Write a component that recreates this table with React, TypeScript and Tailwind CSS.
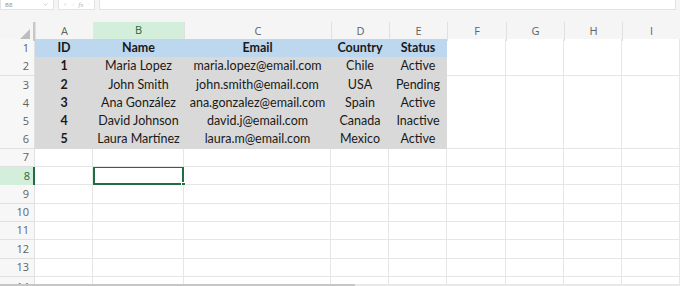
import React from 'react';
import { ChevronDown, X, Check } from 'lucide-react';

const cols = ['A', 'B', 'C', 'D', 'E', 'F', 'G', 'H', 'I'];
const gridCols = 'grid grid-cols-[35px_58px_91px_147px_58px_58px_59px_58px_58px_58px]';

const header = ['ID', 'Name', 'Email', 'Country', 'Status'];
const data = [
  ['1', 'Maria Lopez', 'maria.lopez@email.com', 'Chile', 'Active'],
  ['2', 'John Smith', 'john.smith@email.com', 'USA', 'Pending'],
  ['3', 'Ana González', 'ana.gonzalez@email.com', 'Spain', 'Active'],
  ['4', 'David Johnson', 'david.j@email.com', 'Canada', 'Inactive'],
  ['5', 'Laura Martínez', 'laura.m@email.com', 'Mexico', 'Active'],
];

// row heights as they fall on screen; row 14 is cut by the scroll strip
const heights = ['h-[18px]', 'h-[19px]', 'h-[18px]', 'h-[18px]', 'h-[18px]', 'h-[19px]', 'h-[18px]', 'h-[18px]', 'h-[19px]', 'h-[18px]', 'h-[18px]', 'h-[19px]', 'h-[18px]', 'h-[7px]'];

export default function App() {
  return (
    <div className="w-[680px] h-[286px] overflow-hidden bg-white flex flex-col font-['Lato',sans-serif]">
      {/* Formula bar */}
      <div className="h-[22px] shrink-0 bg-[#f5f5f5] flex items-start gap-1 pr-1">
        <div className="w-[54px] h-[10px] bg-white border border-t-0 border-[#e3e3e3] flex items-center justify-between px-1">
          <span className="text-[6px] leading-none text-[#999]">B8</span>
          <ChevronDown className="w-[7px] h-[7px] text-[#999]" strokeWidth={1.5} />
        </div>
        <div className="w-[37px] h-[10px] bg-white border border-t-0 border-[#e3e3e3] flex items-center gap-[3px] px-1 text-[#b5b5b5]">
          <X className="w-[7px] h-[7px]" strokeWidth={1.5} />
          <Check className="w-[7px] h-[7px]" strokeWidth={1.5} />
          <span className="text-[6px] leading-none italic font-['DejaVu_Serif',serif]">fx</span>
          <ChevronDown className="w-[5px] h-[5px]" strokeWidth={1.5} />
        </div>
        <div className="flex-1 h-[10px] bg-white border border-t-0 border-[#e3e3e3]" />
      </div>

      {/* Column headers */}
      <div className={`${gridCols} h-[17px] shrink-0 bg-[#f5f5f5] font-['Open_Sans',sans-serif] text-[11px] text-[#616161]`}>
        <div className="border-r-2 border-[#c8c8c8] relative">
          <div className="absolute right-[3px] bottom-[2px] w-0 h-0 border-l-[10px] border-l-transparent border-b-[10px] border-b-[#bdbdbd]" />
        </div>
        {cols.map((c) => (
          <div
            key={c}
            className={
              c === 'B'
                ? 'flex items-center justify-center bg-[#d3eedb] text-[#1e6b3a] border-b-2 border-[#1f6e43]'
                : 'flex items-center justify-center border-l border-[#e0e0e0]'
            }
          >
            {c}
          </div>
        ))}
      </div>

      {/* Sheet rows */}
      {heights.map((h, i) => {
        const r = i + 1;
        const filled = r <= 6;
        const values = r === 1 ? header : r <= 6 ? data[r - 2] : [];
        const last = r === 14;
        return (
          <div key={r} className={`${gridCols} ${h} shrink-0 overflow-hidden`}>
            <div
              className={
                r === 8
                  ? 'flex items-center justify-end pr-[3px] bg-[#d3eedb] text-[#1e6b3a] border-r-2 border-[#1f6e43] font-["Open_Sans",sans-serif] text-[11px]'
                  : `flex ${last ? 'items-start pt-[2px]' : 'items-center border-b'} justify-end pr-[5px] bg-[#f7f7f7] text-[#616161] border-r border-[#e0e0e0] font-["Open_Sans",sans-serif] text-[11px]`
              }
            >
              {r}
            </div>
            {cols.map((c, j) => {
              const v = values[j];
              if (filled && j < 5) {
                return (
                  <div
                    key={c}
                    className={`flex items-center justify-center whitespace-nowrap text-[12.5px] text-[#1a1a1a] ${
                      r === 1 ? 'bg-[#bdd7ee] font-bold' : 'bg-[#d9d9d9]'
                    } ${j === 0 ? 'font-bold' : ''}`}
                  >
                    {v}
                  </div>
                );
              }
              if (r === 8 && c === 'B') {
                return (
                  <div key={c} className="relative border-2 border-[#1f6e43] -mt-px">
                    <div className="absolute -right-[4px] -bottom-[4px] w-[5px] h-[5px] bg-[#1f6e43] border border-white" />
                  </div>
                );
              }
              return <div key={c} className={`border-r border-[#e6e6e6] ${last ? '' : 'border-b'}`} />;
            })}
          </div>
        );
      })}

      {/* Scroll strip */}
      <div className="flex-1 bg-[#e8e8e8] flex">
        <div className="w-[355px] bg-[#c6c6c6]" />
      </div>
    </div>
  );
}
